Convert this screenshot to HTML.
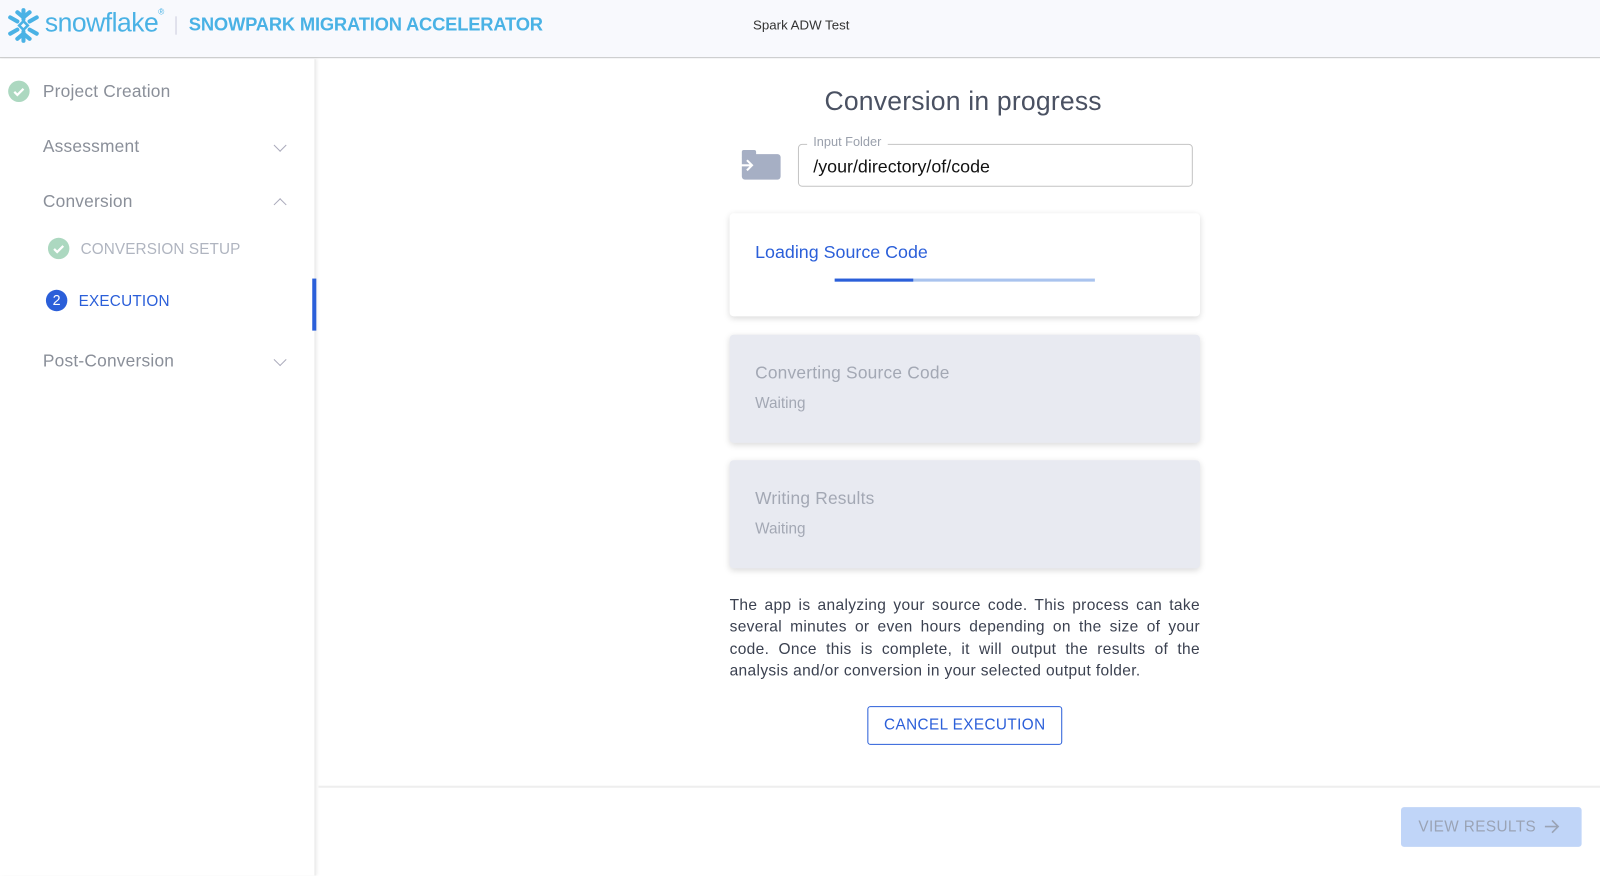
<!DOCTYPE html>
<html><head><style>
*{margin:0;padding:0;box-sizing:border-box}
body{width:1600px;height:858px;background:#fff;font-family:"Liberation Sans",sans-serif;overflow:hidden}
#w{position:relative;width:1568px;height:841px;transform:scale(1.0204);transform-origin:0 0}
.hdr{position:absolute;left:0;top:0;width:1568px;height:57px;background:#f8f9fd;border-bottom:1px solid #c8c8c8}
.abs{position:absolute;white-space:nowrap}
.side{position:absolute;left:0;top:58px;width:310px;height:800px;border-right:2px solid #eee;box-shadow:1px 0 3px rgba(0,0,0,.06)}
.nav{font-size:17px;color:#8a8f99;letter-spacing:.2px}
.chev{position:absolute;width:9px;height:9px;border-right:1.6px solid #aab;border-bottom:1.6px solid #aab}
.card{position:absolute;left:715px;width:461px;border-radius:4px;box-shadow:0 2px 6px rgba(0,0,0,.15)}
.gray{background:#e8eaf1}
.ct{font-size:17px;color:#a3a8b4;letter-spacing:.2px}
.cw{font-size:15px;color:#a3a8b4}
</style></head><body><div id="w">
<div class="hdr">
<svg class="abs" style="left:5px;top:7px" width="36" height="36" viewBox="0 0 36 36" fill="none" stroke="#4ab2e5" stroke-width="4" stroke-linecap="round"><path d="M18 3v9M18 24v9M5 10l7 4M24 22l7 4M5 26l7-4M24 14l7-4M12 5l6 5 6-5M12 31l6-5 6 5"/><rect x="15" y="15" width="6" height="6" transform="rotate(45 18 18)" stroke-width="2.5"/></svg>
<div class="abs" style="left:44px;top:7px;font-size:26px;color:#4ab2e5;letter-spacing:-0.5px">snowflake<span style="font-size:8px;vertical-align:top">®</span></div>
<div class="abs" style="left:172px;top:16px;width:1px;height:18px;background:#ccd"></div>
<div class="abs" style="left:185px;top:14px;font-size:18px;font-weight:bold;color:#4ab2e5;letter-spacing:-.2px">SNOWPARK MIGRATION ACCELERATOR</div>
<div class="abs" style="left:738px;top:17px;font-size:13px;color:#333">Spark ADW Test</div>
</div>
<div class="side">
<div class="abs" style="left:8px;top:21px;width:21px;height:21px;border-radius:50%;background:#acd8c0"><svg width="21" height="21"><path d="M6 11l3 3 6-6" stroke="#fff" stroke-width="2.2" fill="none"/></svg></div>
<div class="abs nav" style="left:42px;top:22px">Project Creation</div>
<div class="abs nav" style="left:42px;top:76px">Assessment</div>
<div class="chev" style="left:270px;top:80px;transform:rotate(45deg)"></div>
<div class="abs nav" style="left:42px;top:130px">Conversion</div>
<div class="chev" style="left:270px;top:138px;transform:rotate(225deg)"></div>
<div class="abs" style="left:47px;top:175px;width:21px;height:21px;border-radius:50%;background:#acd8c0"><svg width="21" height="21"><path d="M6 11l3 3 6-6" stroke="#fff" stroke-width="2.2" fill="none"/></svg></div>
<div class="abs" style="left:79px;top:178px;font-size:15px;color:#b0b5c0;letter-spacing:.1px">CONVERSION SETUP</div>
<div class="abs" style="left:45px;top:226px;width:21px;height:21px;border-radius:50%;background:#2b5fd9;color:#fff;font-size:14px;text-align:center;line-height:21px">2</div>
<div class="abs" style="left:77px;top:229px;font-size:15px;color:#2b5fd9;letter-spacing:.2px">EXECUTION</div>
<div class="abs" style="left:306px;top:215px;width:4px;height:51px;background:#2b5fd9"></div>
<div class="abs nav" style="left:42px;top:286px">Post-Conversion</div>
<div class="chev" style="left:270px;top:290px;transform:rotate(45deg)"></div>
</div>
<div class="abs" style="left:808px;top:84px;font-size:26px;color:#4a5162;letter-spacing:.2px">Conversion in progress</div>
<svg class="abs" style="left:723px;top:147px" width="43" height="30"><rect x="4" y="0" width="14" height="8" rx="2" fill="#a6afc4"/><rect x="4" y="4" width="38" height="25" rx="3" fill="#a6afc4"/><path d="M0 15h14M9 10l5 5-5 5" stroke="#fff" stroke-width="2" fill="none"/></svg>
<div class="abs" style="left:782px;top:141px;width:387px;height:42px;border:1px solid #c4c4c4;border-radius:4px"></div>
<div class="abs" style="left:791px;top:132px;background:#fff;padding:0 6px;font-size:12.5px;color:#9aa0ac">Input Folder</div>
<div class="abs" style="left:797px;top:153px;font-size:17.5px;color:#111">/your/directory/of/code</div>
<div class="card" style="top:209px;height:101px;background:#fff">
<div class="abs" style="left:25px;top:28px;font-size:17.5px;color:#2b5fd9">Loading Source Code</div>
<div class="abs" style="left:103px;top:64px;width:255px;height:3px;background:#a9c3ee"></div>
<div class="abs" style="left:103px;top:64px;width:77px;height:3px;background:#2b5fd9"></div>
</div>
<div class="card gray" style="top:328px;height:106px"><div class="abs ct" style="left:25px;top:28px">Converting Source Code</div><div class="abs cw" style="left:25px;top:59px">Waiting</div></div>
<div class="card gray" style="top:451px;height:106px"><div class="abs ct" style="left:25px;top:28px">Writing Results</div><div class="abs cw" style="left:25px;top:59px">Waiting</div></div>
<div class="abs" style="left:715px;top:583px;width:461px;white-space:normal;text-align:justify;font-size:15.2px;letter-spacing:.35px;line-height:21.3px;color:#3b4150">The app is analyzing your source code. This process can take several minutes or even hours depending on the size of your code. Once this is complete, it will output the results of the analysis and/or conversion in your selected output folder.</div>
<div class="abs" style="left:850px;top:692px;width:191px;height:38px;border:1px solid #2b5fd9;border-radius:3px;color:#2b5fd9;font-size:15px;text-align:center;line-height:36px;letter-spacing:.4px">CANCEL EXECUTION</div>
<div class="abs" style="left:312px;top:770px;width:1256px;height:2px;background:#eee"></div>
<div class="abs" style="left:1373px;top:791px;width:177px;height:39px;background:#c0d5f8;border-radius:3px;color:#9aa3b5;font-size:15px;line-height:39px;padding-left:17px;letter-spacing:.4px">VIEW RESULTS<svg style="position:absolute;left:140px;top:12px" width="16" height="14"><path d="M1 7h13M8 1l6 6-6 6" stroke="#9aa3b5" stroke-width="1.6" fill="none"/></svg></div>
</div></body></html>
